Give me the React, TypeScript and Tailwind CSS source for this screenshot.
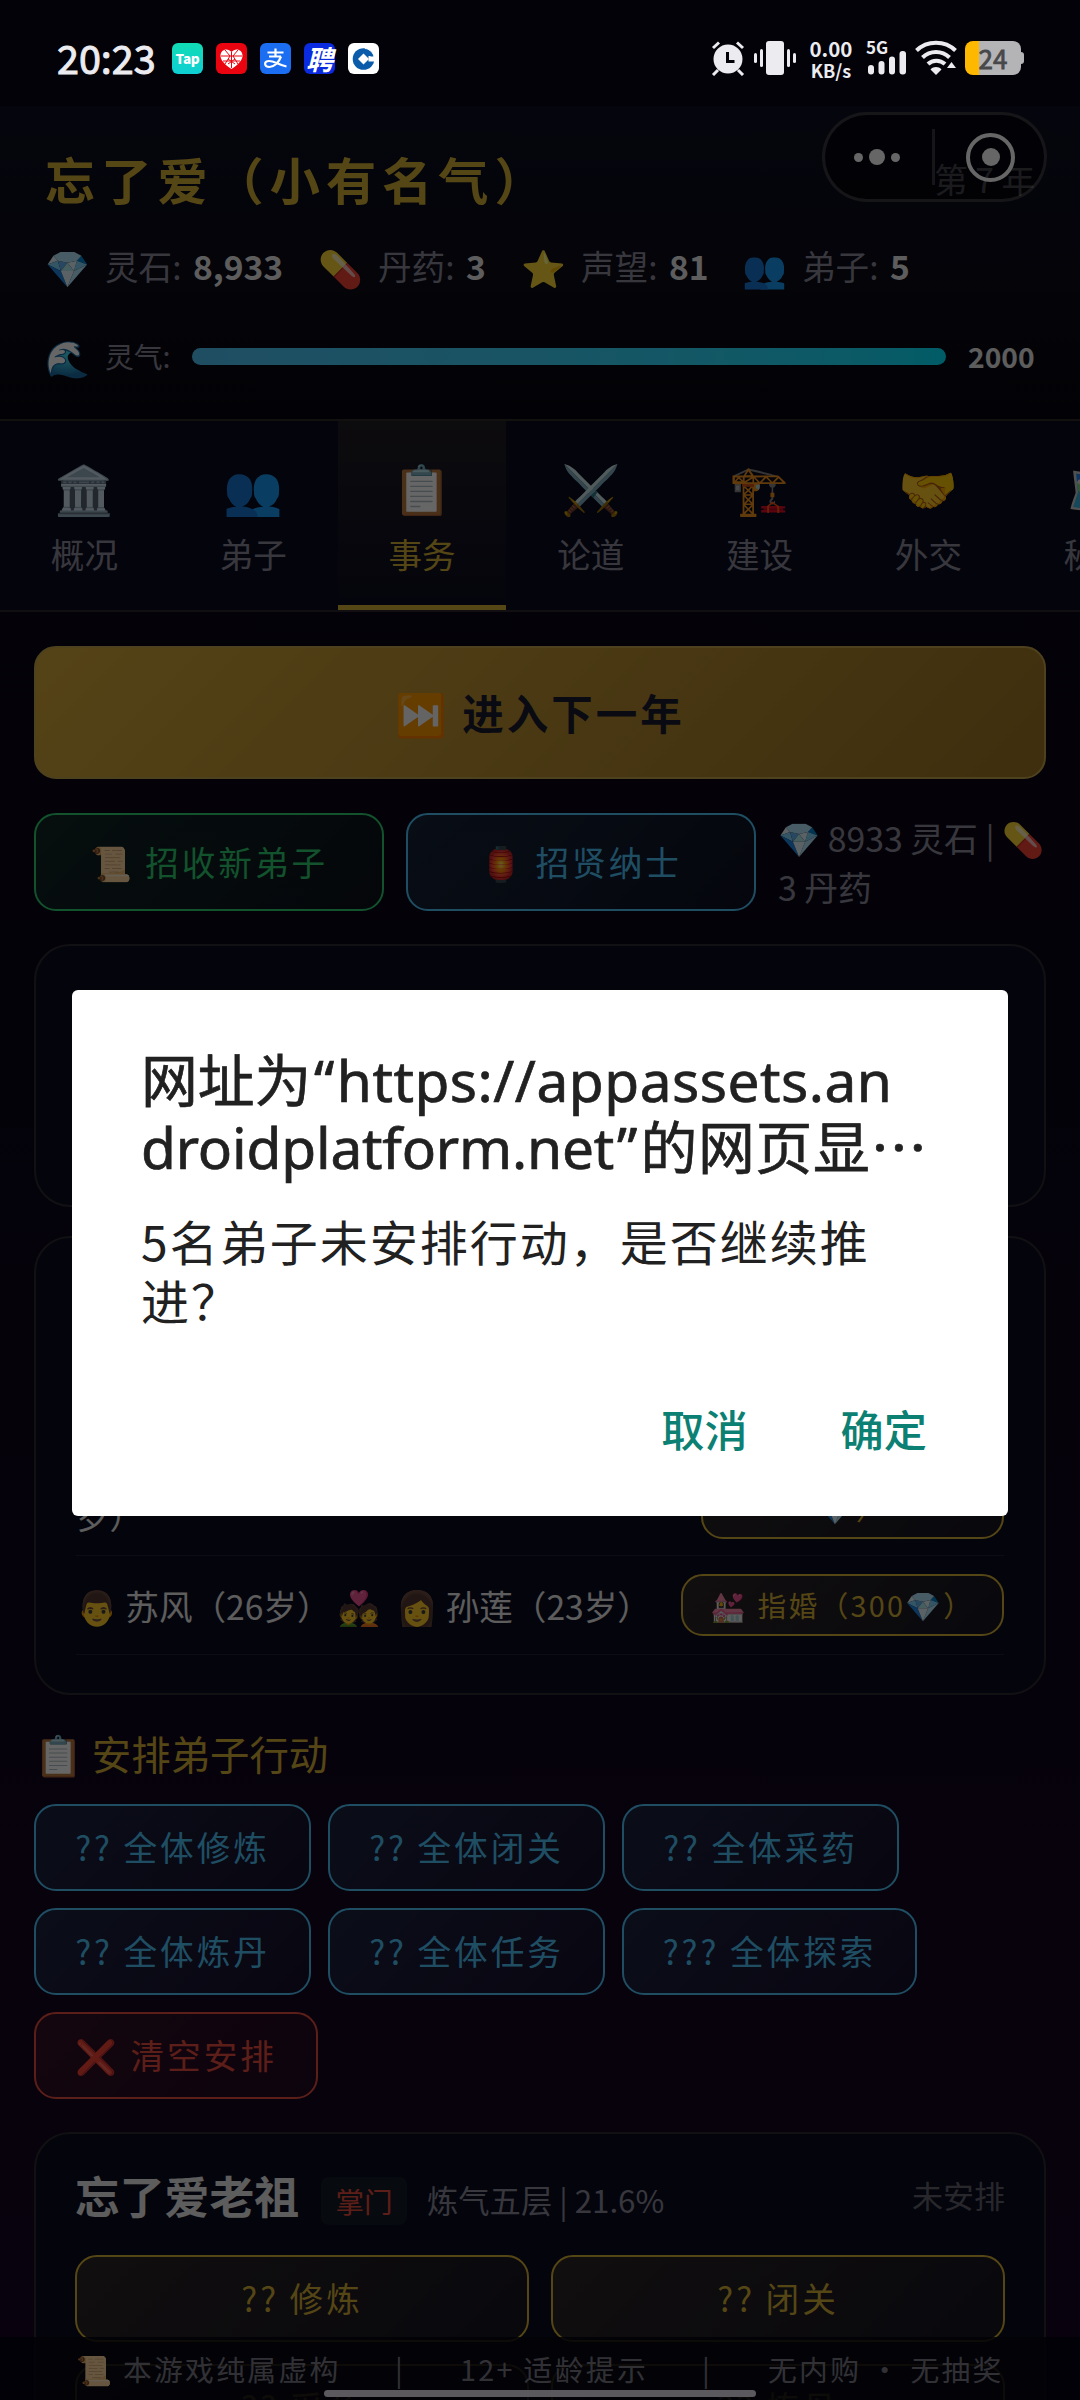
import { ReactNode } from "react";
import clsx from "clsx";
import { twMerge } from "tailwind-merge";

const stats = [
  { icon: "💎", label: "灵石:", value: "8,933", width: "w-[273px]" },
  { icon: "💊", label: "丹药:", value: "3", width: "w-[203px]" },
  { icon: "⭐", label: "声望:", value: "81", width: "w-[221px]" },
  { icon: "👥", label: "弟子:", value: "5", width: "w-[200px]" },
];

const tabs = [
  { icon: "🏛️", label: "概况" },
  { icon: "👥", label: "弟子" },
  { icon: "📋", label: "事务", active: true },
  { icon: "⚔️", label: "论道" },
  { icon: "🏗️", label: "建设" },
  { icon: "🤝", label: "外交" },
  { icon: "🗺️", label: "秘境" },
];

const bulkActions = [
  { label: "?? 全体修炼", width: "w-[277px]" },
  { label: "?? 全体闭关", width: "w-[277px]" },
  { label: "?? 全体采药", width: "w-[277px]" },
  { label: "?? 全体炼丹", width: "w-[277px]" },
  { label: "?? 全体任务", width: "w-[277px]" },
  { label: "??? 全体探索", width: "w-[295px]" },
];

const variants = {
  green: "border-[#2ecc71] bg-linear-135 from-[#2ecc71]/15 to-[#2ecc71]/5 text-[#2ecc71]",
  blue: "border-[#4fc3f7] bg-linear-135 from-[#4fc3f7]/15 to-[#4fc3f7]/5 text-[#4fc3f7]",
  gold: "border-[#d4af37] bg-linear-135 from-[#d4af37]/15 to-[#d4af37]/5 text-[#d4af37]",
  red: "border-[#e74c3c] bg-linear-135 from-[#e74c3c]/15 to-[#e74c3c]/5 text-[#e74c3c]",
};

function Button({
  variant,
  className,
  children,
}: {
  variant: keyof typeof variants;
  className?: string;
  children: ReactNode;
}) {
  return (
    <button
      className={twMerge(
        "flex shrink-0 items-center justify-center whitespace-pre rounded-[22px] border-2 text-[33.6px] tracking-[3px]",
        variants[variant],
        className
      )}
    >
      {children}
    </button>
  );
}

function AppBadges() {
  return (
    <div className="flex gap-[13px]">
      <div className="flex h-[31px] w-[31px] items-center justify-center rounded-[6px] bg-linear-to-b from-[#12dcb4] to-[#0fcfd4] text-[13.5px] font-black leading-none tracking-[-0.3px] text-white">
        Tap
      </div>
      <svg className="h-[31px] w-[31px]" viewBox="0 0 31 31">
        <rect width="31" height="31" rx="6" fill="#ea0410" />
        <path
          d="M15.5 26C8 21 4.5 17 4.5 12.5 4.5 6 12 4.5 15.5 9 19 4.5 26.5 6 26.5 12.5 26.5 17 23 21 15.5 26Z"
          fill="#fff"
        />
        <path
          d="M15.5 9V25M5 13h21M7 18h17M9 7l5 6-5 8M22 7l-5 6 5 8M12 16l7 5M19 16l-7 5"
          stroke="#ea0410"
          strokeWidth="1"
          fill="none"
        />
      </svg>
      <svg className="h-[31px] w-[31px]" viewBox="0 0 31 31" fill="none" stroke="#fff" strokeWidth="2.2">
        <rect width="31" height="31" rx="6" fill="#1b6df2" stroke="none" />
        <path d="M7.5 9.500h16M15.500 5.500v8M9 13.500h12" />
        <path d="M21 13.500C19 19 14.500 24 9.500 24 4 24 3.500 18 9 18c5.500 0 9.500 4 17.500 5.500" />
      </svg>
      <div className="flex h-[31px] w-[31px] items-center justify-center rounded-[6px] bg-[#0a2be0] text-[27px] font-bold italic leading-none text-white">
        聘
      </div>
      <svg className="h-[31px] w-[31px]" viewBox="0 0 31 31">
        <rect width="31" height="31" rx="6" fill="#fff" />
        <circle cx="15.5" cy="16" r="10.8" fill="#0a5cab" />
        <path d="M15.5 10.5l5.500 5.500-5.500 5.500-5.500-5.500z" fill="#fff" />
        <path d="M17 5.500c4 .5 7.500 3.500 9 7.500" stroke="#fff" strokeWidth="1.2" fill="none" />
        <path d="M20.500 13h8v5.500h-8z" fill="#fff" />
        <path d="M16 6c4 1.500 6 4 6.500 7.500h3C24.500 9.500 21.500 6.500 16 6z" fill="#0a5cab" />
      </svg>
    </div>
  );
}

function StatusBar() {
  return (
    <div className="relative z-20 flex h-[106px] shrink-0 items-start justify-between bg-[#020208] px-[56px] text-[#ececf0]">
      <div className="flex pt-[43px]">
        <span className="-mt-[2px] w-[116px] pl-px text-[39.5px] leading-[31px] [-webkit-text-stroke:1px]">20:23</span>
        <AppBadges />
      </div>
      <div className="flex pt-[40px]">
        <svg className="mr-[9px] h-[36px] w-[34px]" viewBox="0 0 34 36" fill="none" stroke="#ececf0">
          <path d="M2 8l6-5.500M32 8l-6-5.500" strokeWidth="3" />
          <path d="M7 30l-5 5M27 30l5 5" strokeWidth="3" />
          <circle cx="17" cy="19" r="14.5" fill="#ececf0" stroke="none" />
          <path d="M16.500 12v9.500h7" stroke="#020208" strokeWidth="3" />
        </svg>
        <svg className="mr-[13px] h-[36px] w-[42px]" viewBox="0 0 42 36" fill="#ececf0">
          <rect x="12" y="1" width="18" height="34" rx="3" />
          <rect x="6" y="9" width="3" height="18" rx="1.5" />
          <rect x="33" y="9" width="3" height="18" rx="1.5" />
          <rect x="0" y="13" width="3" height="10" rx="1.5" />
          <rect x="39" y="13" width="3" height="10" rx="1.5" />
        </svg>
        <div className="mr-[13px] w-[44px] text-center text-[20.5px] font-bold leading-[20px]">
          <div className="-mt-[2px]">0.00</div>
          <div className="mt-[3px] text-[18px] leading-[18px]">KB/s</div>
        </div>
        <div className="mr-[8px] h-[36px] w-[41px]">
          <div className="h-[11px] text-[17px] font-bold leading-[14px]">5G</div>
          <svg className="-mt-[11px] h-[36px] w-[41px]" viewBox="0 0 41 36" fill="#ececf0">
            <rect x="2" y="25" width="6" height="9.5" rx="3" />
            <rect x="12.5" y="21" width="6" height="13.5" rx="3" />
            <rect x="23" y="16.5" width="6" height="18" rx="3" />
            <rect x="33.5" y="11" width="6.5" height="23.5" rx="3" />
          </svg>
        </div>
        <svg className="mr-[8px] h-[36px] w-[42px]" viewBox="0 0 42 36" fill="none" stroke="#ececf0" strokeWidth="4">
          <path d="M1.500 10.500C12 0 30 0 40.500 10.500" />
          <path d="M7.500 17.500c7.500-7.500 19.500-7.500 27 0" />
          <path d="M13 24c4.500-4.500 12-4.500 17 0" />
          <path d="M15.500 29.500c3-3.200 8-3.200 11 0L21 35z" fill="#ececf0" stroke="none" />
          <path d="M32 28l4.500-6 4.500 6z" fill="#ececf0" stroke="none" />
        </svg>
        <div className="mt-[1px] flex h-[34px] items-center">
          <div className="flex h-[34px] w-[56px] items-center justify-center rounded-[8px] bg-linear-to-r from-[#ffb800] from-[14px] to-[#b4b4b7] to-[14px] pb-[1px] text-[26px] leading-none text-[#48484a] [-webkit-text-stroke:0.8px]">
            24
          </div>
          <div className="h-[12px] w-[3px] rounded-r-[3px] bg-[#b4b4b7]" />
        </div>
      </div>
    </div>
  );
}

function Header() {
  return (
    <header className="h-[315px] shrink-0 border-b-2 border-[#302928] bg-linear-to-b from-[#0e0e22] to-[#07070f] px-[45px]">
      <div className="flex h-[146px] items-center justify-between">
        <h1 className="text-[50.2px] font-bold tracking-[6px] text-[#d4af37]">忘了爱（小有名气）</h1>
        <span className="text-[33.6px] text-[#8a8a9a]">第 7 年</span>
      </div>
      <div className="flex h-[28px] items-center">
        {stats.map((s) => (
          <div key={s.label} className={clsx("flex shrink-0 items-center leading-[28px]", s.width)}>
            <span className="w-[60px] text-[36px]">{s.icon}</span>
            <span className="w-[88px] whitespace-nowrap text-[33.6px] text-[#8a8a9a]">{s.label}</span>
            <span className="text-[33.6px] font-bold text-[#e8e8e8]">{s.value}</span>
          </div>
        ))}
      </div>
      <div className="mt-[58px] flex h-[36px] items-center leading-[34px]">
        <span className="w-[60px] shrink-0 text-[36px]">🌊</span>
        <span className="w-[87px] shrink-0 text-[28.8px] text-[#8a8a9a]">灵气:</span>
        <div className="h-[17px] w-[754px] shrink-0 rounded-full bg-linear-to-r from-[#4fc3f7] to-[#00e5ff]" />
        <span className="ml-[22px] text-[28.2px] font-bold text-[#e8e8e8]">2000</span>
      </div>
    </header>
  );
}

function TabBar() {
  return (
    <nav className="flex h-[191px] shrink-0 overflow-hidden border-b-2 border-[#2b272f] bg-[#0c0c20]">
      {tabs.map((tab) => (
        <div
          key={tab.label}
          className={clsx(
            "flex w-[168.8px] shrink-0 flex-col items-center border-b-[5px] pt-[35px]",
            tab.active
              ? "border-[#d4af37] bg-linear-to-b from-[#d4af37]/10 to-transparent text-[#d4af37]"
              : "border-transparent text-[#8a8a9a]"
          )}
        >
          <span className="h-[60px] text-[48px] leading-[60px]">{tab.icon}</span>
          <span className="mt-[14px] text-[33.6px] leading-[48px]">{tab.label}</span>
        </div>
      ))}
    </nav>
  );
}

function Panel({ className, children }: { className?: string; children?: ReactNode }) {
  return (
    <section className={clsx("shrink-0 rounded-[36px] border-2 border-[#2b292e] bg-[#0c0c20]", className)}>
      {children}
    </section>
  );
}

function MatchPanel() {
  return (
    <Panel className="mt-[29px] flex h-[459px] flex-col justify-end px-[40px] pb-[38px]">
      <div className="flex h-[140px] items-end justify-between border-b border-white/8 pb-[16px] text-[33.6px] text-[#e8e8e8]">
        <span className="leading-[48px]">岁）</span>
        <Button variant="gold" className="h-[104px] w-[303px] items-end pb-[9px] text-[28.8px]">
          <span className="leading-[40px]">💎）</span>
        </Button>
      </div>
      <div className="flex h-[99px] items-center justify-between border-b border-white/8 text-[33.6px] text-[#e8e8e8]">
        <span className="whitespace-pre pt-[2px]">
          👨 苏风（26岁） 💑<span className="ml-[9px]"> 👩 孙莲（23岁）</span>
        </span>
        <Button variant="gold" className="h-[62px] w-[323px] text-[28.8px] tracking-[2.2px]">
          💒 指婚（300💎）
        </Button>
      </div>
    </Panel>
  );
}

function DiscipleCard() {
  return (
    <Panel className="mt-[33px] h-[480px] px-[39px] pt-[33px]">
      <div className="flex h-[56px] items-center">
        <span className="text-[44.8px] font-bold text-[#e8e8e8]">忘了爱老祖</span>
        <span className="ml-[22px] mt-[12px] flex h-[48px] w-[86px] items-center justify-center rounded-[8px] bg-[#131a24] text-[28.6px] text-[#e74c3c]">
          掌门
        </span>
        <span className="ml-[20px] mt-[10px] text-[31.3px] text-[#8a8a9a]">炼气五层 | 21.6%</span>
        <span className="ml-auto text-[31px] text-[#62626e]">未安排</span>
      </div>
      <div className="mt-[32px] grid grid-cols-2 gap-x-[22px] gap-y-[22px]">
        {["?? 修炼", "?? 闭关", "?? 采药", "?? 炼丹"].map((label) => (
          <Button key={label} variant="gold" className="h-[87px]">
            {label}
          </Button>
        ))}
      </div>
    </Panel>
  );
}

function Footer() {
  return (
    <footer className="absolute inset-x-0 bottom-0 flex h-[63px] bg-[#050510]/85 pl-[76px] pt-[9px] text-[28.8px] leading-[46px] tracking-[2.3px] text-[#7a7a86]">
      <span className="w-[319px] whitespace-pre">📜 本游戏纯属虚构</span>
      <span className="w-[65px]">|</span>
      <span className="w-[242px]">12+ 适龄提示</span>
      <span className="w-[66px]">|</span>
      <span className="whitespace-nowrap">
        无内购<span className="mx-[9px]">•</span>无抽奖
      </span>
    </footer>
  );
}

function Capsule() {
  return (
    <div className="absolute left-[822px] top-[112px] flex h-[90px] w-[225px] items-center rounded-full border-[3px] border-white/20 bg-black/50">
      <div className="flex w-[107px] items-center justify-center gap-[6px] pr-[3px]">
        <i className="h-[9px] w-[9px] rounded-full bg-white" />
        <i className="h-[16px] w-[16px] rounded-full bg-white" />
        <i className="h-[9px] w-[9px] rounded-full bg-white" />
      </div>
      <div className="h-[56px] w-[3px] bg-white/20" />
      <div className="ml-[31px] flex h-[49px] w-[49px] items-center justify-center rounded-full border-4 border-white">
        <i className="h-[18px] w-[18px] rounded-full bg-white" />
      </div>
    </div>
  );
}

function ConfirmDialog() {
  return (
    <div className="absolute left-[72px] top-[990px] z-20 flex h-[526px] w-[936px] flex-col rounded-[6px] bg-white px-[69px] pt-[57px] text-[#212121]">
      <h2 className="font-['Noto_Sans','Noto_Sans_CJK_SC',sans-serif] text-[56.8px] leading-[67px] [-webkit-text-stroke:0.7px]">
        <span className="block whitespace-nowrap">
          网址为<span className="mx-[2.5px]">“</span>
          <span className="tracking-[0.5px]">https://appassets.an</span>
        </span>
        <span className="block whitespace-nowrap">
          <span className="tracking-[-0.2px]">droidplatform.net</span>
          <span className="mx-[3px]">”</span>
          <span className="tracking-[0.7px]">的网页显⋯</span>
        </span>
      </h2>
      <p className="mt-[30px] text-[48px] leading-[59px] tracking-[2px]">5名弟子未安排行动，是否继续推进？</p>
      <div className="mt-[67px] flex justify-end gap-[93px] pr-[12px] text-[43.2px] font-medium leading-[64px] text-[#0b8073]">
        <button>取消</button>
        <button>确定</button>
      </div>
    </div>
  );
}

export default function App() {
  return (
    <div className="relative flex h-[2400px] w-[1080px] flex-col overflow-hidden bg-linear-to-b from-[#07070f] via-[#0c0719] to-[#170524] font-['Noto_Sans_CJK_SC','Noto_Color_Emoji',sans-serif]">
      <StatusBar />
      <Header />
      <TabBar />
      <main className="flex flex-col px-[34px] pt-[34px]">
        <button className="flex h-[133px] shrink-0 items-center justify-center whitespace-pre rounded-[22px] border-2 border-[#c4a24a] bg-linear-135 from-[#d4a93a] to-[#9c7424] text-[41.5px] font-bold tracking-[3px] text-[#1a1a2e]">
          ⏭️ 进入下一年
        </button>
        <div className="mt-[34px] flex h-[98px] shrink-0 items-center gap-[22px]">
          <Button variant="green" className="h-[98px] w-[350px]">
            📜 招收新弟子
          </Button>
          <Button variant="blue" className="h-[98px] w-[350px]">
            🏮 招贤纳士
          </Button>
          <p className="whitespace-nowrap text-[33.8px] leading-[49px] text-[#8a8a9a]">
            💎 8933 灵石 | 💊
            <br />3 丹药
          </p>
        </div>
        <Panel className="mt-[33px] h-[263px]" />
        <MatchPanel />
        <h3 className="mt-[29px] h-[58px] shrink-0 whitespace-pre text-[39.4px] leading-[58px] text-[#d4af37]">
          📋 安排弟子行动
        </h3>
        <div className="mt-[22px] flex flex-wrap gap-[17px]">
          {bulkActions.map((a) => (
            <Button key={a.label} variant="blue" className={clsx("h-[87px]", a.width)}>
              {a.label}
            </Button>
          ))}
          <Button variant="red" className="h-[87px] w-[284px]">
            ❌ 清空安排
          </Button>
        </div>
        <DiscipleCard />
      </main>
      <Footer />
      <Capsule />
      {/* backdrop */}
      <div className="absolute inset-0 z-10 bg-black/60" />
      <ConfirmDialog />
      <div className="absolute bottom-[3px] left-[324px] z-20 h-[7px] w-[432px] rounded-full bg-[#5b595e]" />
    </div>
  );
}
